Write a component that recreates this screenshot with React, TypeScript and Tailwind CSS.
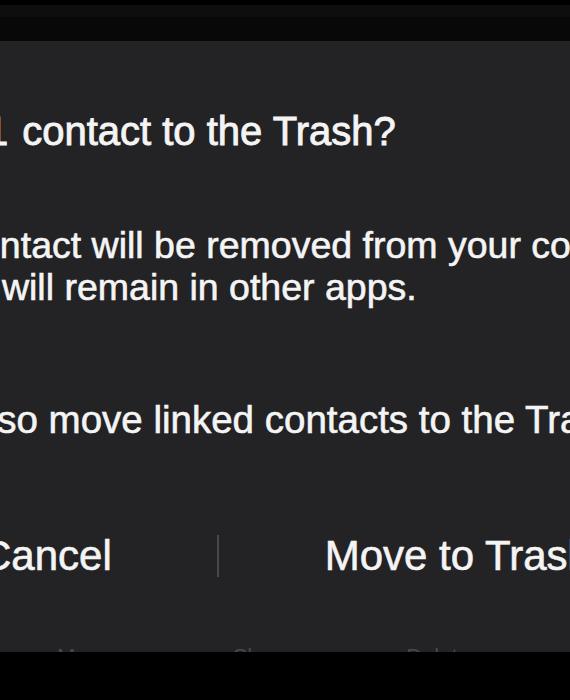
import React from "react";

export default function App() {
  return (
    <div className="w-[570px] h-[700px] overflow-hidden bg-black flex flex-col font-['Liberation_Sans',Arial,sans-serif]">
      {/* top strip */}
      <div className="h-[41px] flex flex-col shrink-0">
        <div className="h-[5px] bg-black" />
        <div className="h-[12px] bg-[#0e0e0e]" />
        <div className="h-[24px] bg-[#080808]" />
      </div>

      {/* dialog */}
      <div className="h-[611px] shrink-0 bg-[#232325] overflow-hidden flex flex-col text-[#f4f4f4]">
        <div className="mt-[68px] ml-[-123px] flex whitespace-nowrap text-[40px] leading-[44px] [-webkit-text-stroke:0.9px_#f4f4f4]">
          <span>Move 1</span>
          <span className="ml-[14px]">contact to the Trash?</span>
        </div>

        <div className="mt-[71px] ml-[-121px] whitespace-nowrap text-[37.5px] leading-[42px] [-webkit-text-stroke:0.6px_#f4f4f4]">
          <div>This contact will be removed from your contacts, but</div>
          <div>Also, it will remain in other apps.</div>
        </div>

        <div className="mt-[91px] ml-[-86px] flex items-center gap-[17px] whitespace-nowrap text-[38.5px] leading-[42px] [-webkit-text-stroke:0.6px_#f4f4f4]">
          <div className="w-[32px] h-[32px] rounded-[7px] border-2 border-[#8a8a8e] shrink-0" />
          <span>Also move linked contacts to the Trash</span>
        </div>

        <div className="mt-[91px] ml-[-19px] flex items-center whitespace-nowrap text-[42px] leading-[48px] [-webkit-text-stroke:0.6px_#f4f4f4]">
          <span>Cancel</span>
          <div className="ml-[105px] w-[2px] h-[42px] bg-[#48484b] shrink-0" />
          <span className="ml-[106px]">Move to Trash</span>
        </div>

        <div className="mt-[64px] flex whitespace-nowrap text-[22px] leading-[26px] text-[#48484c]">
          <span className="w-[164px] text-center">More</span>
          <span className="w-[196px] text-center">Share</span>
          <span className="w-[156px] text-center">Delete</span>
        </div>
      </div>

      <div className="flex-1 bg-black" />
    </div>
  );
}
